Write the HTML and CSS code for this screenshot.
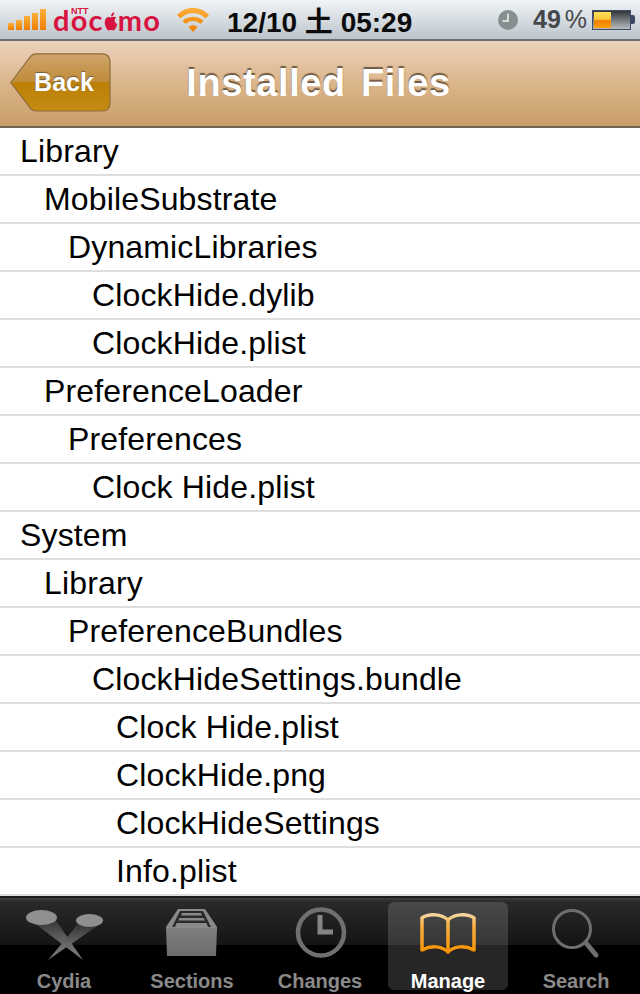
FILE: index.html
```html
<!DOCTYPE html>
<html lang="en">
<head>
    <meta charset="UTF-8">
    <meta name="viewport" content="width=device-width, initial-scale=1.0">
    <title>Installed Files</title>
    <link rel="stylesheet" href="styles.css">
</head>
<body>

    <!-- Status bar -->
    <div class="status-bar">
        <svg class="signal" width="38" height="22" viewBox="0 0 38 22">
            <defs>
                <linearGradient id="orange" x1="0" y1="0" x2="0" y2="1">
                    <stop offset="0" stop-color="#fbb03b"/>
                    <stop offset="1" stop-color="#ef7d00"/>
                </linearGradient>
            </defs>
            <rect x="0" y="14" width="6" height="7" fill="url(#orange)"/>
            <rect x="8" y="11" width="6" height="10" fill="url(#orange)"/>
            <rect x="16" y="7" width="6" height="14" fill="url(#orange)"/>
            <rect x="24" y="4" width="6" height="17" fill="url(#orange)"/>
            <rect x="32" y="0" width="6" height="21" fill="url(#orange)"/>
        </svg>
        <div class="carrier">
            <span class="ntt">NTT</span>
            <span>doc</span><svg class="apple" width="14" height="19" viewBox="0 0 21 24" preserveAspectRatio="none"><path d="M10.5 7C8 5.600 4.500 6 2.500 8.500 0 11.800 1 17 3.800 20.800 5.500 23 7 23.800 8.500 23.200 10 22.600 11 22.600 12.500 23.200 14 23.800 15.500 23 17.200 20.800 18.600 19 19.600 17 20 15.300 17.500 14.400 16 12.500 16 10.500 16 9 17 7.700 18.500 7 16.500 5.600 13 5.600 10.500 7ZM10.500 5.800C10.500 3 12.500 .8 15.300 .3 15.500 3.200 13.300 5.600 10.500 5.800Z" fill="#d7143f"/></svg><span>mo</span>
        </div>
        <svg class="wifi" width="32" height="26" viewBox="0 0 32 26">
            <path d="M16 25 11.500 20C14 17.500 18 17.500 20.500 20ZM8.500 17 5.500 13.700C10.800 8.500 21.200 8.500 26.500 13.700L23.500 17C19.500 13 12.500 13 8.500 17ZM3.500 11.500 0 8C8 -1.500 24 -1.500 32 8L28.500 11.500C22 4.500 10 4.500 3.500 11.500Z" fill="url(#orange)"/>
        </svg>
        <div class="clock">12/10 土 05:29</div>
        <svg class="alarm" width="20" height="20" viewBox="0 0 20 20">
            <circle cx="10" cy="10" r="10" fill="#86908f"/>
            <path d="M10 3.500V11H4.500" fill="none" stroke="#f2f4f4" stroke-width="1.500"/>
        </svg>
        <div class="battery-text">49<span class="percent">%</span></div>
        <div class="battery">
            <div class="battery-fill" style="width: 49%"></div>
        </div>
        <div class="battery-tip"></div>
    </div>

    <!-- Barra de navegacao -->
    <div class="nav-bar">
        <a class="back" href="#">
            <svg class="back-shape" width="101" height="59" viewBox="0 0 101 59">
                <defs>
                    <linearGradient id="backFill" x1="0" y1="0" x2="0" y2="1">
                        <stop offset="0" stop-color="#cfa46d"/>
                        <stop offset=".49" stop-color="#bf8c38"/>
                        <stop offset=".5" stop-color="#bd8006"/>
                        <stop offset="1" stop-color="#c48a12"/>
                    </linearGradient>
                </defs>
                <path d="M.8 29.500 21 3C22.500 1.400 24 .8 26 .8H92C97 .8 100 3.800 100 9V50C100 55 97 58 92 58H26C24 58 22.500 57.400 21 56Z" fill="url(#backFill)" stroke="#8f6c3c" stroke-width="1.200"/>
            </svg>
            <span class="back-label">Back</span>
        </a>
        <h1>Installed Files</h1>
    </div>

    <!-- Lista de arquivos -->
    <ul class="file-list">
        <li class="depth-0">Library</li>
        <li class="depth-1">MobileSubstrate</li>
        <li class="depth-2">DynamicLibraries</li>
        <li class="depth-3">ClockHide.dylib</li>
        <li class="depth-3">ClockHide.plist</li>
        <li class="depth-1">PreferenceLoader</li>
        <li class="depth-2">Preferences</li>
        <li class="depth-3">Clock Hide.plist</li>
        <li class="depth-0">System</li>
        <li class="depth-1">Library</li>
        <li class="depth-2">PreferenceBundles</li>
        <li class="depth-3">ClockHideSettings.bundle</li>
        <li class="depth-4">Clock Hide.plist</li>
        <li class="depth-4">ClockHide.png</li>
        <li class="depth-4">ClockHideSettings</li>
        <li class="depth-4">Info.plist</li>
    </ul>

    <!-- Tab bar -->
    <div class="tab-bar">
        <a class="tab" href="#">
            <svg class="tab-icon" width="80" height="60" viewBox="0 0 80 60">
                <defs>
                    <linearGradient id="beam" x1="0" y1="0" x2="0" y2="1">
                        <stop offset="0" stop-color="#333"/>
                        <stop offset=".6" stop-color="#6a6a6a"/>
                        <stop offset="1" stop-color="#7c7c7c"/>
                    </linearGradient>
                </defs>
                <path d="M9 20 31 17 59 58Z" fill="url(#beam)"/>
                <path d="M54 22 76 22 24 58Z" fill="url(#beam)"/>
                <ellipse cx="17.500" cy="15.500" rx="15.500" ry="7.500" fill="#8f8f8f"/>
                <ellipse cx="65.500" cy="18.500" rx="13.500" ry="6.500" fill="#8f8f8f"/>
            </svg>
            <span>Cydia</span>
        </a>
        <a class="tab" href="#">
            <svg class="tab-icon" width="56" height="60" viewBox="0 0 56 60">
                <defs>
                    <linearGradient id="box" x1="0" y1="0" x2="0" y2="1">
                        <stop offset="0" stop-color="#7e7e7e"/>
                        <stop offset="1" stop-color="#6c6c6c"/>
                    </linearGradient>
                </defs>
                <path d="M14 7H41L53 25V28H2V25Z" fill="#8a8a8a"/>
                <path d="M16 9H39L47 25H8Z" fill="#2a2a2a"/>
                <path d="M18 11H37L38 13.500H17ZM15.500 16H39.500L41 18.500H14ZM12.500 21H42.500L44 25H11Z" fill="#8a8a8a"/>
                <path d="M2 26H53L52 54H3Z" fill="url(#box)"/>
            </svg>
            <span>Sections</span>
        </a>
        <a class="tab" href="#">
            <svg class="tab-icon" width="56" height="60" viewBox="0 0 56 60">
                <circle cx="29" cy="30.500" r="23" fill="none" stroke="#707070" stroke-width="4.500"/>
                <path d="M28 13V30H41" fill="none" stroke="#868686" stroke-width="5"/>
            </svg>
            <span>Changes</span>
        </a>
        <a class="tab tab-active" href="#">
            <svg class="tab-icon" width="60" height="60" viewBox="0 0 60 60">
                <defs>
                    <linearGradient id="book" gradientUnits="userSpaceOnUse" x1="0" y1="11" x2="0" y2="51">
                        <stop offset="0" stop-color="#f3dcae"/>
                        <stop offset=".3" stop-color="#fbb144"/>
                        <stop offset="1" stop-color="#f59200"/>
                    </linearGradient>
                </defs>
                <path d="M30 18C24 12 11 11 4 16V48C13 43 24 44 30 50 36 44 47 43 56 48V16C49 11 36 12 30 18ZM30 18V50" fill="none" stroke="url(#book)" stroke-width="3.500" stroke-linejoin="round"/>
            </svg>
            <span>Manage</span>
        </a>
        <a class="tab" href="#">
            <svg class="tab-icon" width="56" height="60" viewBox="0 0 56 60">
                <circle cx="24" cy="27" r="18.500" fill="none" stroke="#6e6e6e" stroke-width="3"/>
                <path d="M38 41 48 53" stroke="#6e6e6e" stroke-width="5" stroke-linecap="round"/>
            </svg>
            <span>Search</span>
        </a>
    </div>

</body>
</html>
```

FILE: styles.css
```css
* {
    margin: 0;
    padding: 0;
    box-sizing: border-box;
}

body {
    font-family: "Liberation Sans", Arial, sans-serif;
    width: 640px;
    height: 994px;
    overflow: hidden;
    background: #fff;
    display: flex;
    flex-direction: column;
}

/* Status bar */
.status-bar {
    height: 41px;
    display: flex;
    align-items: center;
    padding-left: 8px;
    background: linear-gradient(#f1f4f7, #bcc5cb);
    border-bottom: 2px solid #6e7275;
    flex-shrink: 0;
}

.status-bar > * {
    flex-shrink: 0;
}

.signal {
    margin-top: 1px;
}

.carrier {
    position: relative;
    display: flex;
    align-items: center;
    margin-left: 7px;
    width: 121px;
    height: 10px;
    font-family: Lato, sans-serif;
    font-weight: bold;
    font-size: 29px;
    letter-spacing: 1.2px;
    color: #d7143f;
    line-height: 10px;
}

.ntt {
    position: absolute;
    left: 18px;
    top: -8px;
    font-family: "Liberation Sans", sans-serif;
    font-size: 9px;
    line-height: 8px;
    letter-spacing: 0;
}

.apple {
    margin-top: 4px;
}

.wifi {
    margin-left: 3px;
}

.clock {
    margin-left: 18px;
    font-size: 28px;
    font-weight: bold;
    color: #0b0b0b;
    font-family: "Liberation Sans", "Noto Sans CJK JP", sans-serif;
    width: 271px;
    white-space: nowrap;
}

.battery-text {
    margin-left: 15px;
    font-size: 25px;
    font-weight: bold;
    color: #44484b;
    width: 59px;
    white-space: nowrap;
}

.percent {
    margin-left: 4px;
    font-weight: normal;
}

.battery {
    width: 39px;
    height: 20px;
    border: 1px solid #3e4a66;
    background: linear-gradient(#33363a, #b9bcbf);
    padding: 1px;
}

.battery-fill {
    height: 100%;
    background: linear-gradient(#fce25a 0, #fbc53a 45%, #ef7f00 55%, #f9a40e 100%);
}

.battery-tip {
    width: 4px;
    height: 9px;
    background: #3e4a66;
    border-radius: 0 2px 2px 0;
}

/* Barra de navegacao */
.nav-bar {
    position: relative;
    height: 87px;
    display: flex;
    align-items: center;
    justify-content: center;
    background: linear-gradient(#ecd3bd, #ddb78e 45%, #c99e68 100%);
    border-bottom: 2px solid #6f6355;
    flex-shrink: 0;
}

.nav-bar h1 {
    font-size: 38px;
    font-weight: bold;
    color: #fff;
    text-shadow: 0 -2px 1px #6e5a44;
    letter-spacing: 0.6px;
    word-spacing: 4px;
    margin-left: -3px;
}

.back {
    position: absolute;
    left: 10px;
    top: 12px;
    width: 101px;
    height: 59px;
    display: flex;
    align-items: center;
    justify-content: center;
    text-decoration: none;
}

.back-shape {
    position: absolute;
    left: 0;
    top: 0;
}

.back-label {
    position: relative;
    padding-left: 7px;
    font-size: 25px;
    font-weight: bold;
    color: #fff;
    text-shadow: 0 -1px 1px #6e5a44;
}

/* Lista de arquivos */
.file-list {
    list-style: none;
    height: 768px;
    flex-shrink: 0;
    overflow: hidden;
}

.file-list li {
    height: 48px;
    line-height: 46px;
    font-size: 32px;
    letter-spacing: 0.15px;
    color: #000;
    border-bottom: 2px solid #dedede;
    white-space: nowrap;
}

.depth-0 { padding-left: 20px; }
.depth-1 { padding-left: 44px; }
.depth-2 { padding-left: 68px; }
.depth-3 { padding-left: 92px; }
.depth-4 { padding-left: 116px; }

/* Tab bar */
.tab-bar {
    flex: 1;
    display: flex;
    border-top: 2px solid #1d1d1d;
    background: linear-gradient(#3f3f3f 0, #2a2a2a 4%, #141414 49%, #000 49%);
}

.tab {
    width: 120px;
    margin: 4px;
    border-radius: 6px;
    display: flex;
    flex-direction: column;
    align-items: center;
    justify-content: space-between;
    text-decoration: none;
    font-size: 20px;
    font-weight: bold;
    color: #8a8a8a;
    line-height: 24px;
}

.tab span {
    margin-bottom: -3px;
}

.tab-icon {
    display: block;
    height: 60px;
}

.tab-active {
    background: rgba(255, 255, 255, 0.15);
    color: #fff;
}
```
